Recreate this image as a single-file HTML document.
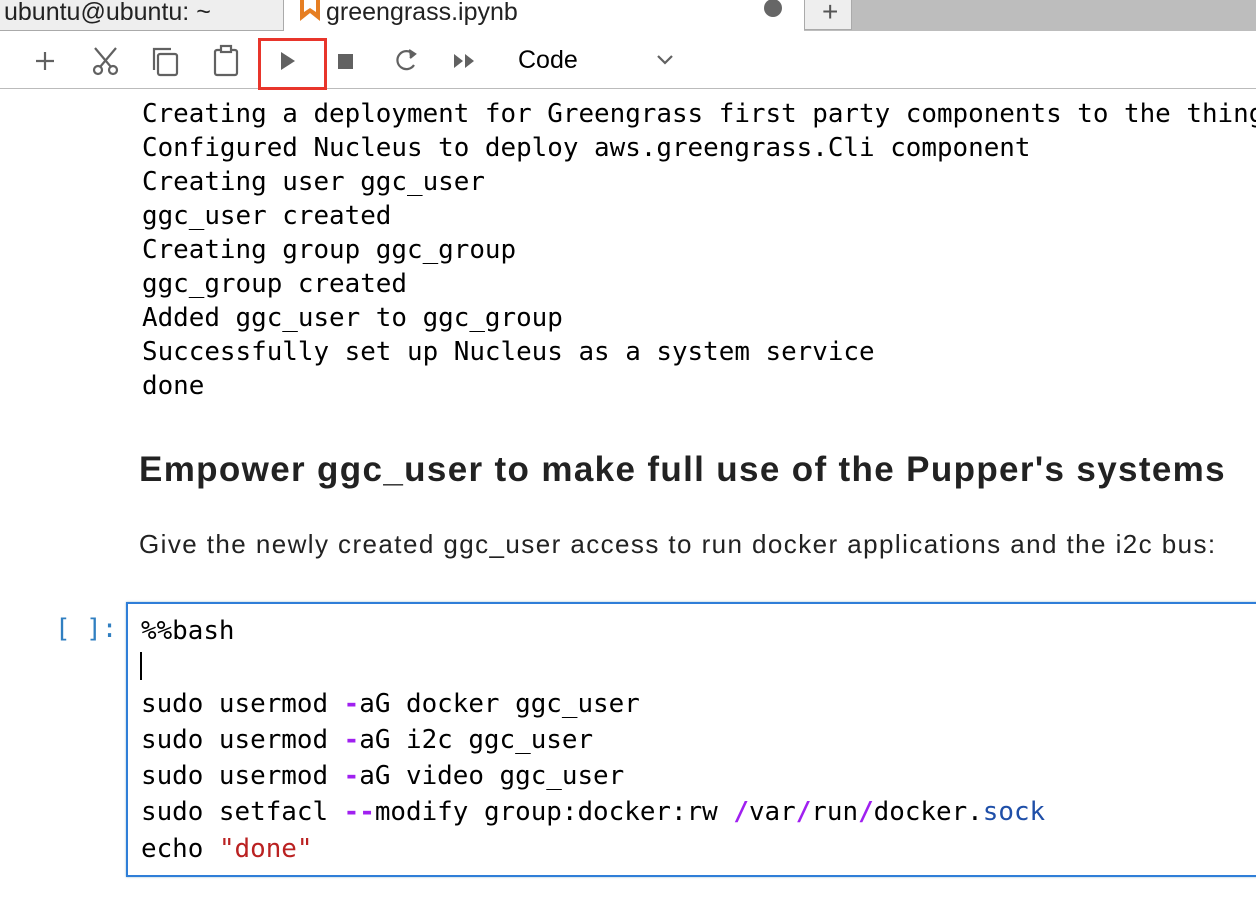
<!DOCTYPE html>
<html><head><meta charset="utf-8"><style>
body{margin:0;width:1256px;height:910px;overflow:hidden;background:#fff;font-family:"Liberation Sans",sans-serif;position:relative}
.a{position:absolute}
.mono{font-family:"DejaVu Sans Mono",monospace;font-size:25.9px;white-space:pre;color:#000}
.p{color:#a020f0;font-weight:bold}
</style></head><body>
<div class="a" style="left:0;top:0;width:1256px;height:31px;background:#bdbdbd"></div>
<div class="a" style="left:0;top:0;width:283px;height:30px;background:#eeeeee;border-right:1px solid #aaa;border-bottom:1px solid #aaa"></div>
<div class="a" style="left:4px;top:-2px;font-size:25px;color:#222">ubuntu@ubuntu: ~</div>
<div class="a" style="left:336px;top:-4px;font-size:28px;color:#555">✕</div>
<div class="a" style="left:284px;top:0;width:520px;height:32px;background:#fff"></div>
<svg class="a" style="left:299px;top:0" width="22" height="22"><path d="M1 0H21V21L11 13L1 21Z" fill="#e67e22"/><path d="M5 0H17V12L11 8L5 12Z" fill="#fff"/></svg>
<div class="a" style="left:326px;top:-2px;font-size:25px;color:#222">greengrass.ipynb</div>
<div class="a" style="left:764px;top:-1px;width:18px;height:18px;border-radius:50%;background:#666"></div>
<div class="a" style="left:804px;top:0;width:46px;height:29px;background:#eee;border:1px solid #aaa;border-top:0"></div>
<div class="a" style="left:822px;top:-4px;font-size:28px;color:#555">+</div>
<div class="a" style="left:0;top:88px;width:1256px;height:1px;background:#bbb"></div>
<svg class="a" style="left:0;top:32px" width="700" height="56" fill="none" stroke="#616161" stroke-width="2.2">
<path d="M36 29H54M45 20V38"/>
<circle cx="98" cy="38" r="4"/><circle cx="113" cy="38" r="4"/><path d="M100 35L116 16M111 35L95 16"/>
<rect x="158" y="22" width="19" height="21" rx="2"/><path d="M154 38V17H171"/>
<rect x="215" y="18" width="22" height="25" rx="2"/><rect x="221" y="14" width="10" height="6" fill="#fff"/>
<path d="M281 20L295 29L281 38Z" fill="#616161" stroke="none"/>
<rect x="338" y="22" width="15" height="15" fill="#616161" stroke="none"/>
<path d="M413 22A9 9 0 1 0 414 33"/><path d="M409 18L415 22L410 26" fill="#616161"/>
<path d="M454 22L463 29L454 36ZM465 22L474 29L465 36Z" fill="#616161" stroke="none"/>
<path d="M658 24L665 31L672 24"/>
</svg>
<div class="a" style="left:258px;top:38px;width:63px;height:46px;border:3px solid #e8352b"></div>
<div class="a" style="left:518px;top:46px;font-size:25px;color:#000">Code</div>
<div class="a mono" style="left:142px;top:97px;line-height:34px">Creating a deployment for Greengrass first party components to the thing
Configured Nucleus to deploy aws.greengrass.Cli component
Creating user ggc_user
ggc_user created
Creating group ggc_group
ggc_group created
Added ggc_user to ggc_group
Successfully set up Nucleus as a system service
done</div>
<div class="a" style="left:139px;top:450px;font-size:35px;font-weight:bold;color:#222;letter-spacing:1.35px;white-space:nowrap">Empower ggc_user to make full use of the Pupper's systems</div>
<div class="a" style="left:139px;top:529px;font-size:26px;color:#222;letter-spacing:1.42px;white-space:nowrap">Give the newly created ggc_user access to run docker applications and the i2c bus:</div>
<div class="a mono" style="left:55px;top:614px;color:#307fc1">[ ]:</div>
<div class="a" style="left:126px;top:602px;width:1140px;height:275px;border:2px solid #2f7ed8;box-sizing:border-box;box-shadow:0 0 2px #9bc"></div>
<div class="a" style="left:140px;top:652px;width:2px;height:28px;background:#000"></div>
<div class="a mono" style="left:141px;top:613px;line-height:36.3px">%%bash

sudo usermod <span class="p">-</span>aG docker ggc_user
sudo usermod <span class="p">-</span>aG i2c ggc_user
sudo usermod <span class="p">-</span>aG video ggc_user
sudo setfacl <span class="p">--</span>modify group:docker:rw <span class="p">/</span>var<span class="p">/</span>run<span class="p">/</span>docker.<span style="color:#1f4fa8">sock</span>
echo <span style="color:#ba2121">"done"</span></div>
</body></html>
